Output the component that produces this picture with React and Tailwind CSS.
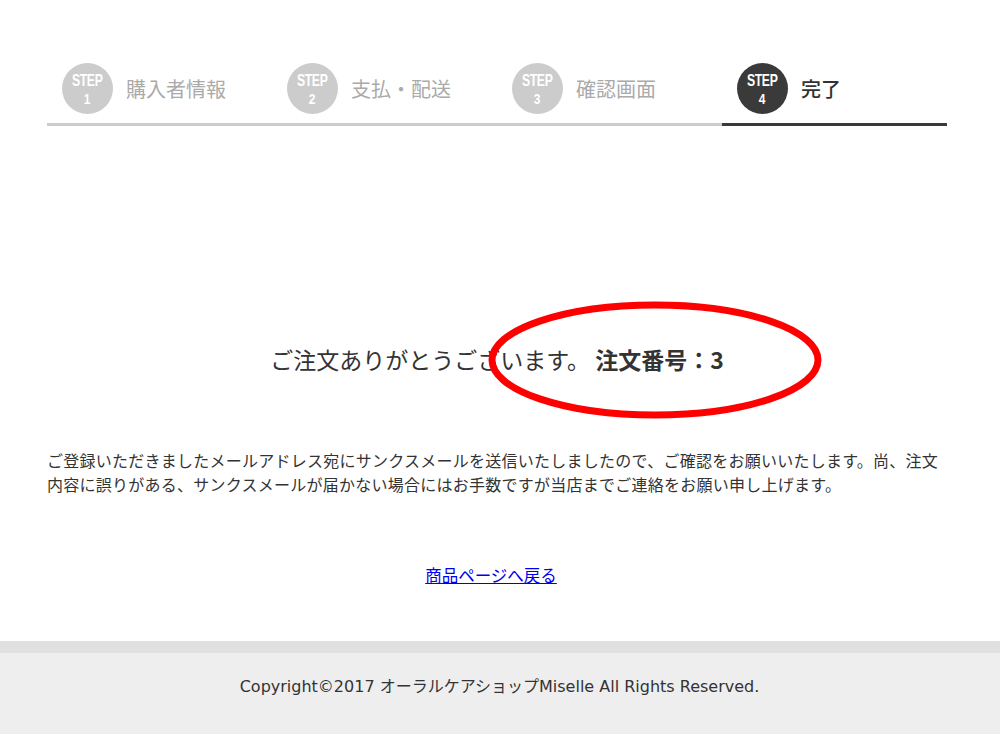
import React from "react";

const steps = [
  { no: 1, label: "購入者情報" },
  { no: 2, label: "支払・配送" },
  { no: 3, label: "確認画面" },
  { no: 4, label: "完了", active: true },
];

const jp = { fontFamily: '"Noto Sans CJK JP", "DejaVu Sans", sans-serif' };
const latin = { fontFamily: '"DejaVu Sans", "Noto Sans CJK JP", sans-serif' };
const narrow = { fontFamily: '"Liberation Sans", "Noto Sans", sans-serif' };

export default function App() {
  return (
    <div className="min-h-screen bg-white flex flex-col text-[#333]" style={jp}>
      {/* Steps */}
      <div className="w-[900px] ml-[47px] pt-[63px] flex">
        {steps.map((s) => (
          <div
            key={s.no}
            className={`flex-1 flex items-center gap-[13px] pl-[15px] pb-[9px] border-b-[3px] ${
              s.active ? "border-[#3a3a3a]" : "border-[#cccccc]"
            }`}
          >
            <div
              className={`w-[51px] h-[51px] rounded-full flex flex-col items-center justify-center text-white leading-none ${
                s.active ? "bg-[#3a3a3a]" : "bg-[#cccccc]"
              }`}
              style={narrow}
            >
              <span className="block text-[17px] font-semibold tracking-[-0.5px] scale-x-[0.72]">STEP</span>
              <span className="block text-[15px] font-semibold mt-[2px] scale-x-[0.8]">{s.no}</span>
            </div>
            <span className={`text-[20px] ${s.active ? "text-[#333] font-medium" : "text-[#aaaaaa]"}`}>
              {s.label}
            </span>
          </div>
        ))}
      </div>

      {/* Thanks message */}
      <div className="relative w-[900px] ml-[47px] mt-[216px] text-center">
        <p className="text-[23px] leading-[34px] text-[#333]">
          ご注文ありがとうございます。 <span className="font-bold">注文番号：3</span>
        </p>
        <svg
          className="absolute left-[440px] top-[-42px] pointer-events-none"
          width="336"
          height="120"
          viewBox="0 0 336 120"
        >
          <ellipse cx="168" cy="60" rx="163" ry="55" fill="none" stroke="#ff0000" strokeWidth="7" />
        </svg>
      </div>

      <p className="w-[900px] ml-[47px] mt-[72px] text-[16px] leading-[24px] tracking-[0.25px] text-[#333]">
        ご登録いただきましたメールアドレス宛にサンクスメールを送信いたしましたので、ご確認をお願いいたします。尚、注文内容に誤りがある、サンクスメールが届かない場合にはお手数ですが当店までご連絡をお願い申し上げます。
      </p>

      <div className="w-[900px] ml-[47px] text-center mt-[67px] pr-[12px]">
        <a href="#" className="text-[16.5px] text-[#0000ee] underline">
          商品ページへ戻る
        </a>
      </div>

      {/* Footer */}
      <footer className="mt-[53px] flex-1 bg-[#eeeeee] border-t-[12px] border-[#e0e0e0] flex justify-center pt-[22px] pb-[30px]">
        <p className="text-[16px] text-[#333] pr-[1px]" style={latin}>
          Copyright©2017 オーラルケアショップMiselle All Rights Reserved.
        </p>
      </footer>
    </div>
  );
}
